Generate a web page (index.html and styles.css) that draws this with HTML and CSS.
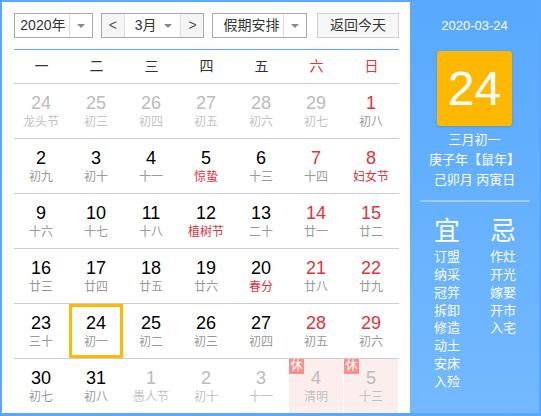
FILE: index.html
```html
<!DOCTYPE html>
<html lang="zh">
<head>
<meta charset="utf-8">
<link rel="stylesheet" href="styles.css">
</head>
<body>
<div class="cal">
  <div class="main">
    <div class="toolbar">
      <div class="sel year"><span class="sel-text">2020年</span><span class="sel-arrow"><i class="tri"></i></span></div>
      <div class="month-group">
        <span class="nav">&lt;</span>
        <div class="month"><span class="sel-text">3月</span><i class="tri"></i></div>
        <span class="nav">&gt;</span>
      </div>
      <div class="sel holiday"><span class="sel-text">假期安排</span><span class="sel-arrow"><i class="tri"></i></span></div>
      <div class="today-btn">返回今天</div>
    </div>
    <div class="weekhead">
      <span>一</span><span>二</span><span>三</span><span>四</span><span>五</span><span class="red">六</span><span class="red">日</span>
    </div>
    <div class="week">
      <div class="day other"><b>24</b><em>龙头节</em></div>
      <div class="day other"><b>25</b><em>初三</em></div>
      <div class="day other"><b>26</b><em>初四</em></div>
      <div class="day other"><b>27</b><em>初五</em></div>
      <div class="day other"><b>28</b><em>初六</em></div>
      <div class="day other"><b>29</b><em>初七</em></div>
      <div class="day wk"><b>1</b><em>初八</em></div>
    </div>
    <div class="week">
      <div class="day"><b>2</b><em>初九</em></div>
      <div class="day"><b>3</b><em>初十</em></div>
      <div class="day"><b>4</b><em>十一</em></div>
      <div class="day fest"><b>5</b><em>惊蛰</em></div>
      <div class="day"><b>6</b><em>十三</em></div>
      <div class="day wk"><b>7</b><em>十四</em></div>
      <div class="day wk fest"><b>8</b><em>妇女节</em></div>
    </div>
    <div class="week">
      <div class="day"><b>9</b><em>十六</em></div>
      <div class="day"><b>10</b><em>十七</em></div>
      <div class="day"><b>11</b><em>十八</em></div>
      <div class="day fest"><b>12</b><em>植树节</em></div>
      <div class="day"><b>13</b><em>二十</em></div>
      <div class="day wk"><b>14</b><em>廿一</em></div>
      <div class="day wk"><b>15</b><em>廿二</em></div>
    </div>
    <div class="week">
      <div class="day"><b>16</b><em>廿三</em></div>
      <div class="day"><b>17</b><em>廿四</em></div>
      <div class="day"><b>18</b><em>廿五</em></div>
      <div class="day"><b>19</b><em>廿六</em></div>
      <div class="day fest"><b>20</b><em>春分</em></div>
      <div class="day wk"><b>21</b><em>廿八</em></div>
      <div class="day wk"><b>22</b><em>廿九</em></div>
    </div>
    <div class="week">
      <div class="day"><b>23</b><em>三十</em></div>
      <div class="day selected"><b>24</b><em>初一</em></div>
      <div class="day"><b>25</b><em>初二</em></div>
      <div class="day"><b>26</b><em>初三</em></div>
      <div class="day"><b>27</b><em>初四</em></div>
      <div class="day wk"><b>28</b><em>初五</em></div>
      <div class="day wk"><b>29</b><em>初六</em></div>
    </div>
    <div class="week">
      <div class="day"><b>30</b><em>初七</em></div>
      <div class="day"><b>31</b><em>初八</em></div>
      <div class="day other"><b>1</b><em>愚人节</em></div>
      <div class="day other"><b>2</b><em>初十</em></div>
      <div class="day other"><b>3</b><em>十一</em></div>
      <div class="day other rest"><span class="badge">休</span><b>4</b><em>清明</em></div>
      <div class="day other rest"><span class="badge">休</span><b>5</b><em>十三</em></div>
    </div>
  </div>
  <div class="side">
    <div class="side-date">2020-03-24</div>
    <div class="big-day">24</div>
    <div class="lunar-info">
      <div>三月初一</div>
      <div>庚子年【鼠年】</div>
      <div>己卯月 丙寅日</div>
    </div>
    <div class="divider"></div>
    <div class="yiji">
      <div class="col">
        <div class="yj-title">宜</div>
        <div>订盟</div><div>纳采</div><div>冠笄</div><div>拆卸</div><div>修造</div><div>动土</div><div>安床</div><div>入殓</div>
      </div>
      <div class="col">
        <div class="yj-title">忌</div>
        <div>作灶</div><div>开光</div><div>嫁娶</div><div>开市</div><div>入宅</div>
      </div>
    </div>
  </div>
</div>
</body>
</html>
```

FILE: styles.css
```css
* { box-sizing: border-box; }
html, body { margin: 0; padding: 0; background: #fff; }
body { font-family: "Liberation Sans", "Noto Sans CJK SC", sans-serif; color: #333; }

.cal {
  width: 541px;
  height: 416px;
  border: 2px solid #59a8fd;
  border-bottom-width: 3px;
  display: flex;
  overflow: hidden;
}

.main {
  width: 408px;
  padding: 11px 11px 0 12px;
}

.toolbar {
  display: flex;
  height: 25px;
  font-size: 14px;
  line-height: 23px;
  color: #333;
}

.sel {
  display: flex;
  border: 1px solid #a9a9a9;
  background: #fff;
  height: 25px;
}
.sel .sel-text { flex: 1; text-align: center; }
.sel .sel-arrow {
  width: 23px;
  border-left: 1px solid #ddd;
  display: flex;
  align-items: center;
  justify-content: center;
}
.tri {
  display: inline-block;
  width: 0; height: 0;
  border-left: 4px solid transparent;
  border-right: 4px solid transparent;
  border-top: 4px solid #888;
}
.year { width: 79px; margin-right: 8px; }
.year .sel-text { padding-left: 2px; }

.month-group {
  display: flex;
  width: 104px;
  height: 25px;
  border: 1px solid #a9a9a9;
  margin-right: 8px;
}
.nav {
  width: 22px;
  text-align: center;
  background: #f5f5f5;
  color: #555;
  font-size: 14px;
}
.month {
  flex: 1;
  display: flex;
  align-items: center;
  justify-content: space-between;
  padding: 0 8px 0 10px;
  border-left: 1px solid #ddd;
  border-right: 1px solid #ddd;
}
.month .sel-text { line-height: 23px; }

.holiday { width: 95px; margin-right: 10px; }
.holiday .sel-text { text-align: left; padding-left: 10px; }

.today-btn {
  width: 82px;
  height: 25px;
  border: 1px solid #cfcfcf;
  background: #f7f7f7;
  text-align: center;
}

.weekhead {
  margin-top: 11px;
  border-top: 1px solid #5aa9fd;
  height: 34px;
  display: grid;
  grid-template-columns: repeat(7, 55px);
  font-size: 14px;
  line-height: 33px;
  color: #333;
}
.weekhead span { text-align: center; }
.weekhead .red { color: #e2323a; }

.week {
  border-top: 1px solid #cccccc;
  height: 55px;
  display: grid;
  grid-template-columns: repeat(7, 55px);
}

.day {
  position: relative;
  width: 54px;
  height: 54px;
  text-align: center;
  padding-top: 9px;
}
.day b {
  display: block;
  font-weight: normal;
  font-size: 18px;
  line-height: 20px;
  color: #000;
}
.day em {
  display: block;
  font-style: normal;
  font-size: 12px;
  line-height: 18px;
  color: #999;
}
.day.wk b { color: #e2323a; }
.day.fest em { color: #e2323a; }
.day.other b { color: #bbb; }
.day.other em { color: #c2c2c2; }

.day.selected {
  border: 3px solid #ffb900;
  padding-top: 6px;
}

.day.rest { background: #fdeeee; }
.badge {
  position: absolute;
  left: 0;
  top: 0;
  width: 15px;
  height: 15px;
  background: #f4928d;
  color: #fff;
  font-size: 12px;
  line-height: 15px;
  text-align: center;
}

.side {
  flex: 1;
  background: linear-gradient(#58a9ff, #74b9ff);
  color: #fff;
  text-align: center;
  padding-top: 14px;
}
.side-date {
  font-size: 13px;
  line-height: 20px;
}
.big-day {
  width: 75px;
  height: 75px;
  margin: 15px auto 0;
  background: #ffb800;
  border-radius: 3px;
  box-shadow: 0 1px 3px rgba(0,0,0,0.15);
  font-size: 48px;
  line-height: 75px;
}
.lunar-info {
  margin-top: 4px;
  font-size: 13px;
  line-height: 20px;
}
.divider {
  margin: 10px 9px 0 10px;
  height: 2px;
  background: rgba(255,255,255,0.35);
}
.yiji {
  display: flex;
  justify-content: center;
  gap: 27px;
  font-size: 13px;
  line-height: 17.85px;
  margin-top: 14px;
}
.yiji .col { width: 28px; margin-left: 1px; }
.yj-title {
  font-size: 26px;
  line-height: 30px;
  margin-bottom: 2px;
}
```
